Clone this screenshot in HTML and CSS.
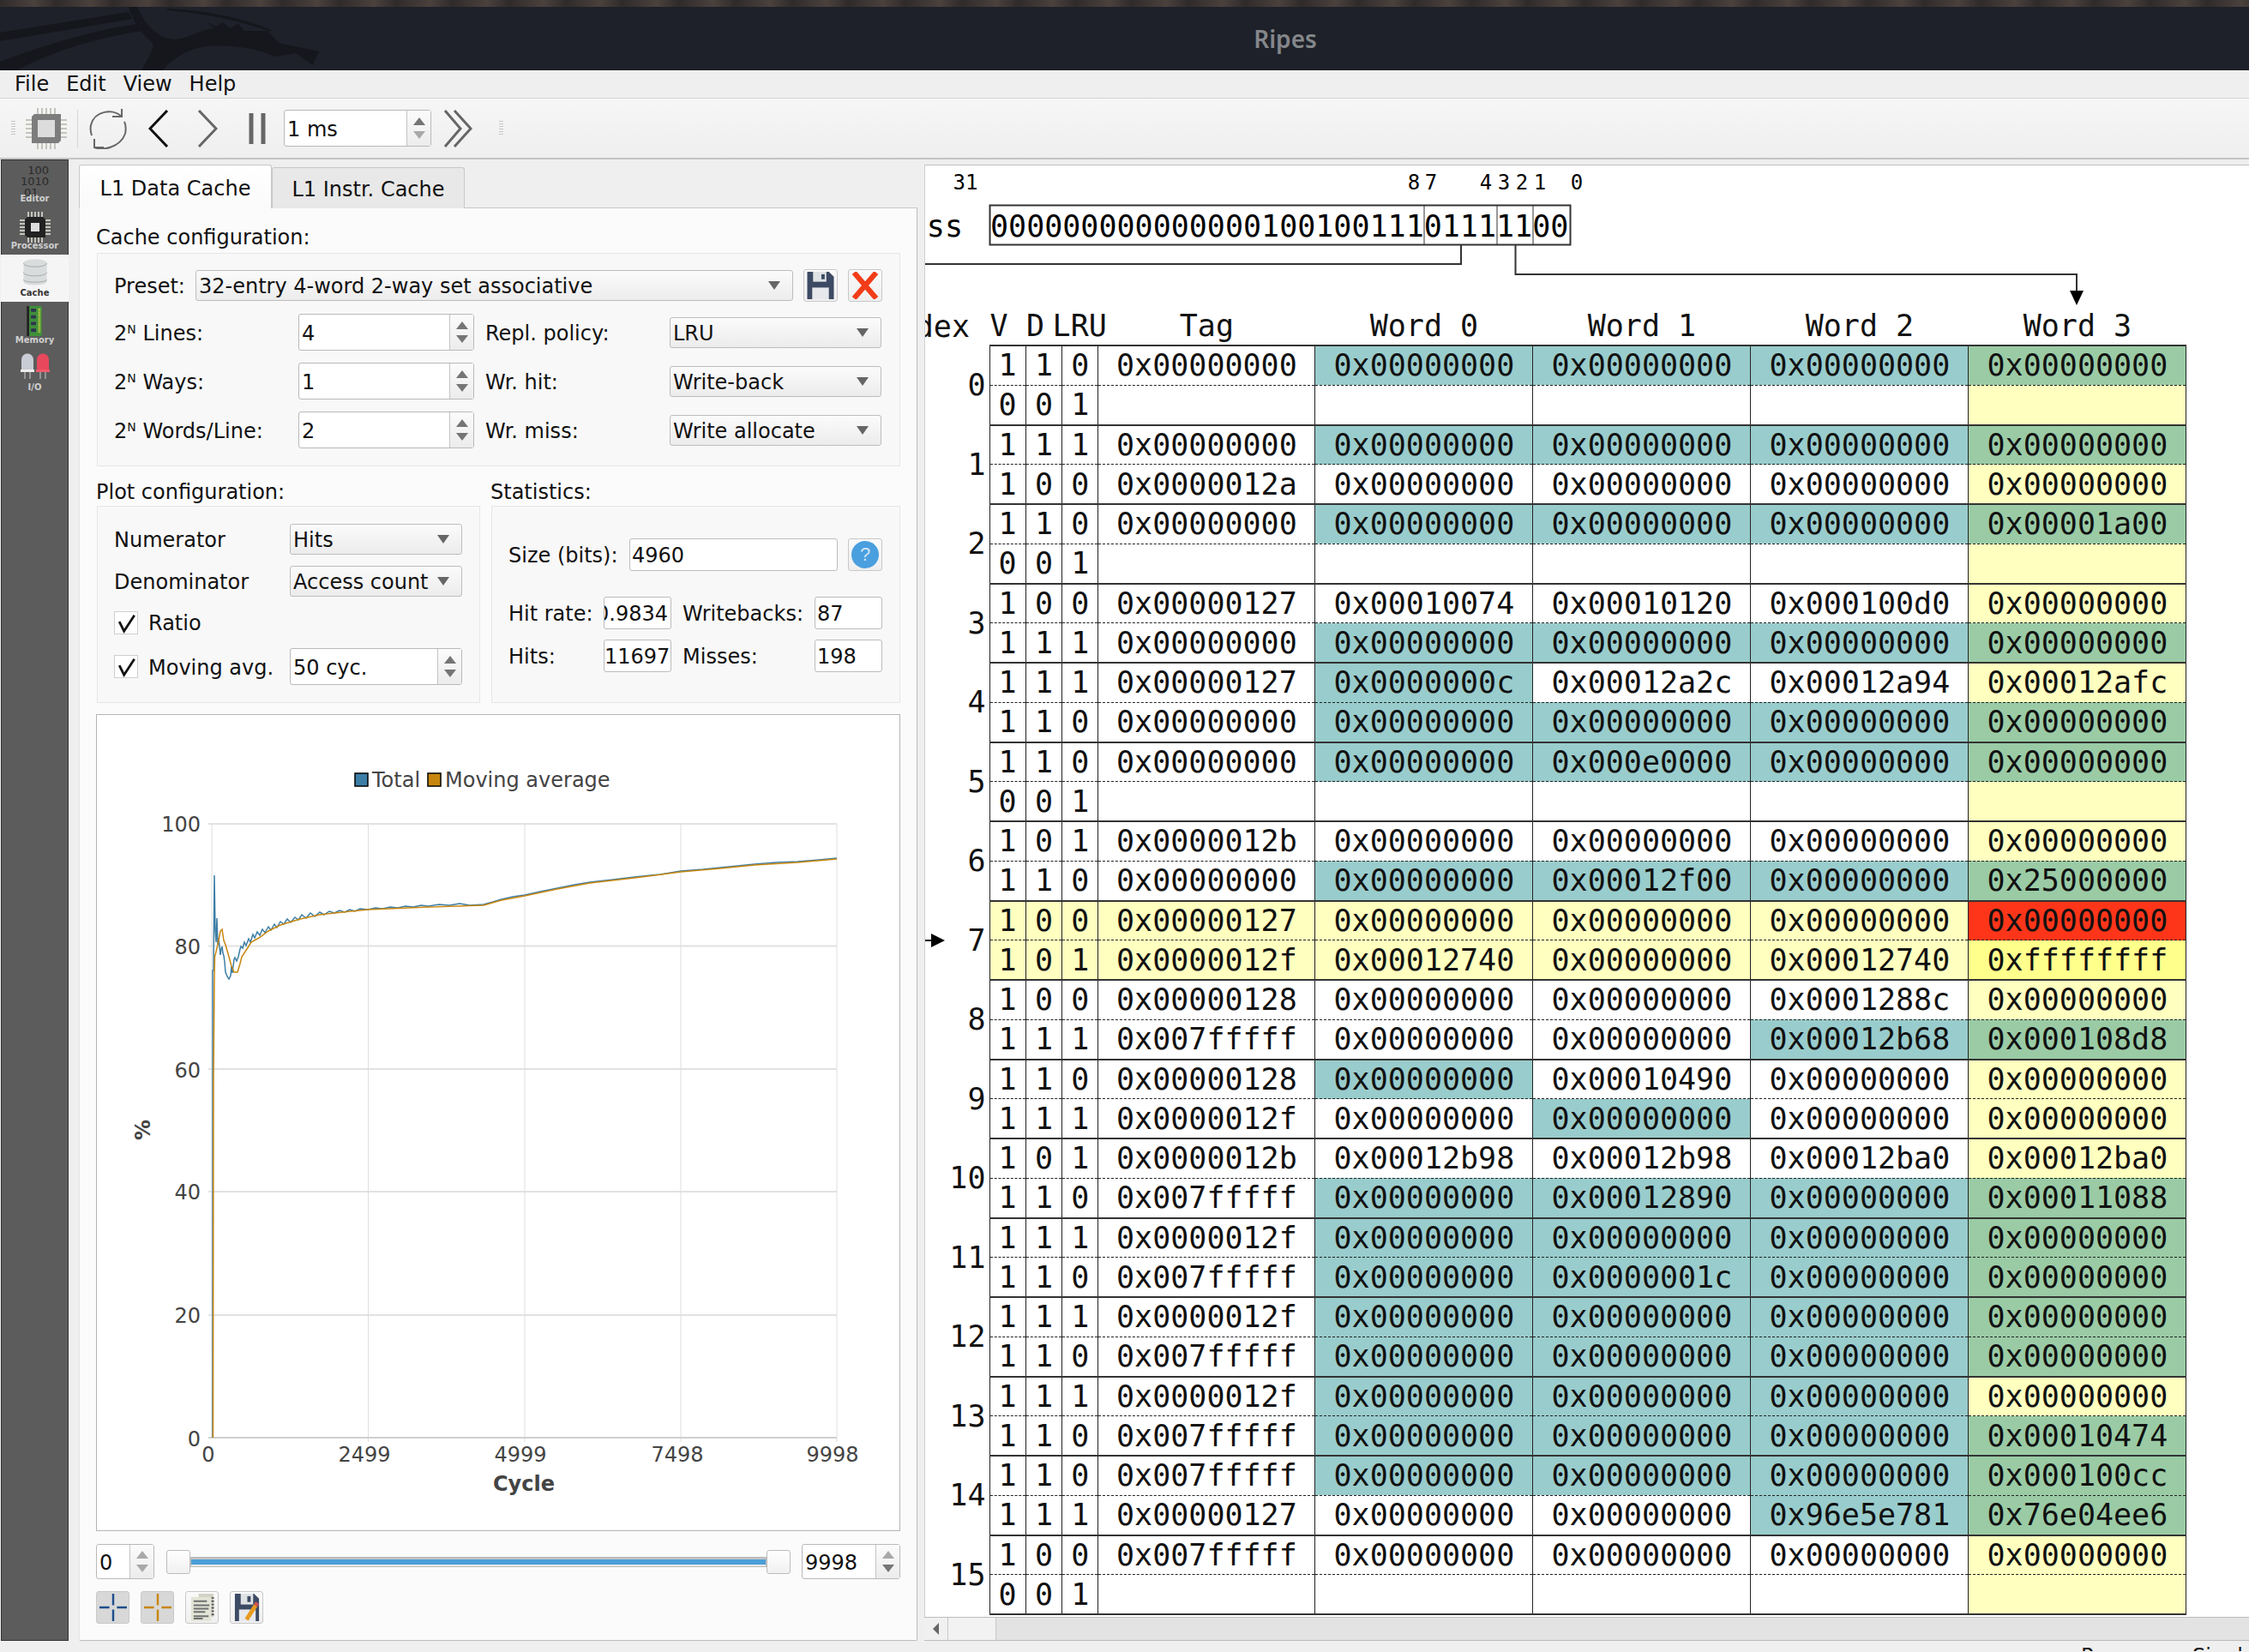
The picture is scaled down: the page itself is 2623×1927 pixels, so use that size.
FILE: index.html
```html
<!DOCTYPE html>
<html lang="en">

<head>
    <meta charset="UTF-8">
    <title>Ripes</title>
    <link rel="stylesheet" href="styles.css">
</head>

<body>
    <div class="wall"></div>
    <header class="titlebar">
        <svg class="dragon" viewBox="0 8 380 74">
            <path d="M0 38L150 14L154 22L0 48Z" />
            <path d="M0 72C60 50 110 35 160 28L165 36C110 45 60 60 20 82H0Z" />
            <path d="M150 8H160C170 30 185 46 205 46C222 44 235 34 250 33L240 25L252 31L260 26L268 33L278 28L285 36H312L325 50L372 60L365 76L345 62L320 66C300 56 270 52 240 54C215 58 200 70 190 82H165C175 65 180 55 178 50C165 40 155 25 150 8Z" />
            <path d="M195 10C240 12 290 22 318 36H312C280 24 240 16 195 12Z" />
        </svg>
        <span class="title">Ripes</span>
    </header>
    <nav class="menubar">
        <span>File</span><span>Edit</span><span>View</span><span>Help</span>
    </nav>
    <div class="toolbar">
        <i class="grip"></i>
        <svg class="tool-chip" viewBox="0 0 48 48">
            <path class="pins" d="M14 0V48M19 0V48M24 0V48M29 0V48M34 0V48M0 14H48M0 19H48M0 24H48M0 29H48M0 34H48" />
            <path class="chip-body" d="M10 7H41V38L38 41H7V10Z" />
            <rect class="chip-core" x="14" y="14" width="20" height="20" />
        </svg>
        <i class="tool-sep"></i>
        <svg class="tool-refresh" viewBox="0 0 44 48">
            <path d="M38 1V10H27M38 10C28 0 6 3 2 20C1 25 2 29 3 32M6 36V46H17M6 46C16 50 36 46 42 30C43 25 43 20 41 16" />
        </svg>
        <svg class="tool-back" viewBox="0 0 24 44"><path d="M22 1L2 22L22 43" /></svg>
        <svg class="tool-next" viewBox="0 0 24 44"><path d="M2 1L22 22L2 43" /></svg>
        <svg class="tool-pause" viewBox="0 0 20 36"><path d="M3 0V36M17 0V36" /></svg>
        <div class="spin tool-spin">
            <span class="spin-val">1 ms</span>
            <span class="spin-btns"><i class="up"></i><i class="down off"></i></span>
        </div>
        <svg class="tool-ff" viewBox="0 0 34 44"><path d="M2 1L20 22L2 43M13 1L32 22L13 43" /></svg>
        <i class="grip grip-end"></i>
    </div>

    <main class="main">
        <aside class="side">
            <div class="side-tab">
                <div class="bits">&nbsp;&nbsp;100<br>1010<br>&nbsp;01</div>
                <span>Editor</span>
            </div>
            <div class="side-tab">
                <svg class="ico-chip" viewBox="0 0 36 36">
                    <path class="pins" d="M10 0V36M14 0V36M18 0V36M22 0V36M26 0V36M0 10H36M0 14H36M0 18H36M0 22H36M0 26H36" />
                    <path fill="#222" d="M9 6H27L30 9V30H9L6 27V9Z" />
                    <rect fill="#ddd" x="13" y="13" width="10" height="10" />
                </svg>
                <span>Processor</span>
            </div>
            <div class="side-tab active">
                <svg class="ico-cache" viewBox="0 0 28 32">
                    <path fill="#d9dcdc" d="M0 5C0 -1 28 -1 28 5V27C28 33 0 33 0 27Z" />
                    <path fill="none" stroke="#a5a8a8" stroke-width="1" d="M0 5C0 11 28 11 28 5M0 16C0 22 28 22 28 16M0 25C0 29 28 29 28 25" />
                </svg>
                <span>Cache</span>
            </div>
            <div class="side-tab">
                <svg class="ico-mem" viewBox="0 0 20 36">
                    <rect fill="#222" x="0" y="0" width="3" height="36" />
                    <rect fill="#3f8f3a" x="3" y="0" width="15" height="36" />
                    <path fill="#2d3550" d="M5 3H11V7H5ZM5 11H11V15H5ZM5 19H11V23H5ZM5 27H11V31H5Z" />
                    <path stroke="#e4d84a" stroke-width="3" stroke-dasharray="1 1" d="M15 3V33" />
                </svg>
                <span>Memory</span>
            </div>
            <div class="side-tab">
                <svg class="ico-led" viewBox="0 0 36 30">
                    <path fill="#c8ccd4" d="M2 20V8C2 -2 16 -2 16 8V20Z" />
                    <path fill="#e8485c" d="M20 20V8C20 -2 34 -2 34 8V20Z" />
                    <path fill="#eee" d="M1 19H17V22H1Z" />
                    <path fill="#f05a6a" d="M19 19H35V22H19Z" />
                    <path stroke="#ccc" stroke-width="1" d="M6 22V30M12 22V30M24 22V30M30 22V30" />
                </svg>
                <span>I/O</span>
            </div>
        </aside>

        <section class="left">
            <div class="tabbar">
                <span class="tab active">L1 Data Cache</span>
                <span class="tab">L1 Instr. Cache</span>
            </div>
            <div class="pane">
                <div class="group-title first">Cache configuration:</div>
                <div class="group cache-group">
                    <div class="preset-row">
                        <span class="preset-label">Preset:</span>
                        <div class="combo preset-combo"><span>32-entry 4-word 2-way set associative</span><i></i></div>
                        <button class="icon-btn">
                            <svg viewBox="0 0 32 33" class="btn-svg">
                                <path fill="#3d4a63" d="M0 0H26L32 6V33H0Z" />
                                <path fill="#dfe2e4" d="M7 0H23V12H7Z" />
                                <rect fill="#3d4a63" x="17" y="3" width="4" height="6" />
                                <rect fill="#e6e8ec" x="6" y="19" width="20" height="14" />
                            </svg>
                        </button>
                        <button class="icon-btn">
                            <svg viewBox="0 0 31 31" class="btn-svg"><path class="red-x" d="M3 1L28 30M28 1L3 30" /></svg>
                        </button>
                    </div>
                    <div class="cfg-grid">
                        <span>2<sup>N</sup> Lines:</span>
                        <div class="spin"><span class="spin-val">4</span><span class="spin-btns"><i class="up"></i><i class="down"></i></span></div>
                        <span>Repl. policy:</span>
                        <div class="combo"><span>LRU</span><i></i></div>
                        <span>2<sup>N</sup> Ways:</span>
                        <div class="spin"><span class="spin-val">1</span><span class="spin-btns"><i class="up"></i><i class="down"></i></span></div>
                        <span>Wr. hit:</span>
                        <div class="combo"><span>Write-back</span><i></i></div>
                        <span>2<sup>N</sup> Words/Line:</span>
                        <div class="spin"><span class="spin-val">2</span><span class="spin-btns"><i class="up"></i><i class="down"></i></span></div>
                        <span>Wr. miss:</span>
                        <div class="combo"><span>Write allocate</span><i></i></div>
                    </div>
                </div>

                <div class="two-groups">
                    <div class="col-plot">
                        <div class="group-title">Plot configuration:</div>
                        <div class="group plot-group">
                            <span>Numerator</span>
                            <div class="combo"><span>Hits</span><i></i></div>
                            <span>Denominator</span>
                            <div class="combo"><span>Access count</span><i></i></div>
                            <label class="check-row wide"><span class="check"><svg viewBox="0 0 27 27"><path d="M5 12L11 24L24 4" /></svg></span><b>Ratio</b></label>
                            <label class="check-row"><span class="check"><svg viewBox="0 0 27 27"><path d="M5 12L11 24L24 4" /></svg></span><b>Moving avg.</b></label>
                            <div class="spin"><span class="spin-val">50 cyc.</span><span class="spin-btns"><i class="up"></i><i class="down"></i></span></div>
                        </div>
                    </div>
                    <div class="col-stats">
                        <div class="group-title">Statistics:</div>
                        <div class="group stats-group">
                            <div class="size-row">
                                <span class="size-label">Size (bits):</span>
                                <div class="field size-field">4960</div>
                                <button class="icon-btn help"><span class="help-dot">?</span></button>
                            </div>
                            <div class="stats-grid">
                                <span>Hit rate:</span>
                                <div class="field clipped"><span>0.9834</span></div>
                                <span>Writebacks:</span>
                                <div class="field">87</div>
                                <span>Hits:</span>
                                <div class="field tight">11697</div>
                                <span>Misses:</span>
                                <div class="field">198</div>
                            </div>
                        </div>
                    </div>
                </div>

                <div class="chart">
                    <svg viewBox="113 835 936 951">
                        <rect class="swatch-a" x="414" y="903" width="15" height="15" />
                        <text class="lbl" x="434" y="919">Total</text>
                        <rect class="swatch-b" x="499" y="903" width="15" height="15" />
                        <text class="lbl" x="519" y="919">Moving average</text>

                        <path class="grid" d="M243 962H976M243 1104.500H976M243 1248H976M243 1391H976M243 1535H976" />
                        <path class="grid thin" d="M247 962V1678M429.500 962V1683M612 962V1683M794 962V1683M976 962V1683" />
                        <path class="axis" d="M243 1678H976" />

                        <text class="lbl end" x="234" y="971">100</text>
                        <text class="lbl end" x="234" y="1114">80</text>
                        <text class="lbl end" x="234" y="1258">60</text>
                        <text class="lbl end" x="234" y="1400">40</text>
                        <text class="lbl end" x="234" y="1544">20</text>
                        <text class="lbl end" x="234" y="1688">0</text>
                        <text class="lbl mid" x="243" y="1706">0</text>
                        <text class="lbl mid" x="425" y="1706">2499</text>
                        <text class="lbl mid" x="607" y="1706">4999</text>
                        <text class="lbl mid" x="790" y="1706">7498</text>
                        <text class="lbl mid" x="971" y="1706">9998</text>
                        <text class="lbl mid bold" x="611" y="1740">Cycle</text>
                        <text class="lbl mid bold" transform="translate(175 1319) rotate(-90)">%</text>

                        <polyline class="line-a" points="248,1678 248,1133 249,1133 250,1022 251,1085 252,1100 253,1072 254,1103 255,1095 257,1115 258,1108 259,1105 260,1113 261,1116 262,1123 263,1135 265,1140 267,1143 269,1139 270,1128 271,1136 273,1120 274,1118 276,1122 278,1117 280,1108 281,1105 283,1107 285,1100 287,1104 290,1096 292,1100 295,1091 297,1095 300,1088 303,1092 306,1085 309,1089 313,1082 316,1086 320,1079 323,1083 327,1076 331,1079 335,1073 339,1077 344,1071 348,1074 352,1068 357,1072 362,1066 367,1070 373,1065 378,1068 384,1064 390,1066 396,1063 402,1065 408,1062 414,1064 420,1061 429,1062 438,1060 446,1061 455,1059 464,1060 473,1058 482,1059 491,1057 500,1058 512,1056 524,1057 536,1055 548,1057 564,1056 575,1053 585,1050 598,1047 612,1045 630,1041 650,1037 670,1033 688,1030 715,1027 740,1024 770,1021 794,1017 820,1015 840,1013 860,1011 880,1009 905,1007 930,1006 955,1004 976,1002" />
                        <polyline class="line-b" points="248.500,1678 249,1262 250,1143 250.500,1117 254,1103 257,1087 259,1085 261,1098 263,1103 267,1117 270,1128 273,1135 277,1135 280,1125 282,1117 288,1108 293,1100 302,1095 313,1087 327,1080 350,1073 373,1068 390,1066 429,1062 500,1059 564,1057 585,1051 612,1046 650,1038 688,1031 740,1025 794,1018 840,1014 880,1010 930,1007 976,1003" />
                    </svg>
                </div>

                <div class="range-row">
                    <div class="spin range-min"><span class="spin-val">0</span><span class="spin-btns"><i class="up off"></i><i class="down off"></i></span></div>
                    <div class="slider">
                        <i class="handle"></i>
                        <div class="track"></div>
                        <i class="handle"></i>
                    </div>
                    <div class="spin range-max"><span class="spin-val">9998</span><span class="spin-btns"><i class="up off"></i><i class="down"></i></span></div>
                </div>

                <div class="chart-btns">
                    <button class="icon-btn on">
                        <svg viewBox="0 0 33 33" class="btn-svg"><path class="cross-a" d="M16.500 0V14M16.500 19V33M0 16.500H12M21 16.500H33" /></svg>
                    </button>
                    <button class="icon-btn on">
                        <svg viewBox="0 0 33 33" class="btn-svg"><path class="cross-b" d="M16.500 0V14M16.500 19V33M0 16.500H12M21 16.500H33" /></svg>
                    </button>
                    <button class="icon-btn">
                        <svg viewBox="0 0 33 33" class="btn-svg">
                            <path fill="#d2d3c4" d="M12 0H30V28H27V4H12Z" />
                            <path fill="#e3e4d6" d="M3 4H27V33H3Z" />
                            <path stroke="#6d7170" stroke-width="2" d="M6 9H22M6 14H25M6 18H24M6 22H20M6 27H24M6 30H17" />
                            <path stroke="#555" stroke-width="3" stroke-dasharray="2 2" d="M29 4V26" />
                        </svg>
                    </button>
                    <button class="icon-btn">
                        <svg viewBox="0 0 33 33" class="btn-svg">
                            <path fill="#3d4a63" d="M2 0H25L31 6V33H2Z" />
                            <path fill="#dfe2e4" d="M9 0H24V13H9Z" />
                            <rect fill="#3d4a63" x="17" y="3" width="4" height="7" />
                            <rect fill="#e6e8ec" x="7" y="19" width="20" height="14" />
                            <path stroke="#e89a20" stroke-width="5" d="M16 31L27 14" />
                            <path stroke="#d9534f" stroke-width="5" d="M27 14L29 11" />
                        </svg>
                    </button>
                </div>
            </div>
        </section>

        <i class="splitter"></i>

        <section class="view">
            <div class="canvas">
                <svg class="addr" viewBox="1078 194 1545 165">
                    <text class="bit" x="1126" y="222">31</text>
                    <text class="bit" x="1649" y="222">8</text>
                    <text class="bit" x="1669" y="222">7</text>
                    <text class="bit" x="1733" y="222">4</text>
                    <text class="bit" x="1754" y="222">3</text>
                    <text class="bit" x="1775" y="222">2</text>
                    <text class="bit" x="1796" y="222">1</text>
                    <text class="bit" x="1839" y="222">0</text>
                    <text class="mono end" x="1123" y="277">ss</text>
                    <rect class="wire" x="1154.500" y="240.500" width="677" height="46" />
                    <path class="wire thin" d="M1661 240V286M1746 240V286M1788 240V286" />
                    <text class="mono" x="1155" y="277">00000000000000010010011101111100</text>
                    <path class="wire" d="M1704 286V309H1078M1767.500 286V321H2422V342" />
                    <path d="M2414 340H2430L2422 357Z" />
                </svg>
                <table class="cache">
                    <colgroup>
                        <col class="c-idx"><col class="c-bit"><col class="c-bit"><col class="c-bit"><col class="c-tag"><col class="c-word"><col class="c-word"><col class="c-word"><col class="c-word">
                    </colgroup>
                    <thead>
                        <tr>
                            <th class="h-idx">dex</th><th class="h-bit">V</th><th class="h-bit">D</th><th class="h-lru">LRU</th><th>Tag</th><th>Word 0</th><th>Word 1</th><th>Word 2</th><th>Word 3</th>
                        </tr>
                    </thead>
                    <tbody>
                        <tr class="top"><td class="idx" rowspan="2">0</td><td>1</td><td>1</td><td>0</td><td>0x00000000</td><td class="t">0x00000000</td><td class="t">0x00000000</td><td class="t">0x00000000</td><td class="g">0x00000000</td></tr>
                        <tr class="low"><td>0</td><td>0</td><td>1</td><td></td><td></td><td></td><td></td><td class="y"></td></tr>
                        <tr class="top"><td class="idx" rowspan="2">1</td><td>1</td><td>1</td><td>1</td><td>0x00000000</td><td class="t">0x00000000</td><td class="t">0x00000000</td><td class="t">0x00000000</td><td class="g">0x00000000</td></tr>
                        <tr class="low"><td>1</td><td>0</td><td>0</td><td>0x0000012a</td><td>0x00000000</td><td>0x00000000</td><td>0x00000000</td><td class="y">0x00000000</td></tr>
                        <tr class="top"><td class="idx" rowspan="2">2</td><td>1</td><td>1</td><td>0</td><td>0x00000000</td><td class="t">0x00000000</td><td class="t">0x00000000</td><td class="t">0x00000000</td><td class="g">0x00001a00</td></tr>
                        <tr class="low"><td>0</td><td>0</td><td>1</td><td></td><td></td><td></td><td></td><td class="y"></td></tr>
                        <tr class="top"><td class="idx" rowspan="2">3</td><td>1</td><td>0</td><td>0</td><td>0x00000127</td><td>0x00010074</td><td>0x00010120</td><td>0x000100d0</td><td class="y">0x00000000</td></tr>
                        <tr class="low"><td>1</td><td>1</td><td>1</td><td>0x00000000</td><td class="t">0x00000000</td><td class="t">0x00000000</td><td class="t">0x00000000</td><td class="g">0x00000000</td></tr>
                        <tr class="top"><td class="idx" rowspan="2">4</td><td>1</td><td>1</td><td>1</td><td>0x00000127</td><td class="t">0x0000000c</td><td>0x00012a2c</td><td>0x00012a94</td><td class="y">0x00012afc</td></tr>
                        <tr class="low"><td>1</td><td>1</td><td>0</td><td>0x00000000</td><td class="t">0x00000000</td><td class="t">0x00000000</td><td class="t">0x00000000</td><td class="g">0x00000000</td></tr>
                        <tr class="top"><td class="idx" rowspan="2">5</td><td>1</td><td>1</td><td>0</td><td>0x00000000</td><td class="t">0x00000000</td><td class="t">0x000e0000</td><td class="t">0x00000000</td><td class="g">0x00000000</td></tr>
                        <tr class="low"><td>0</td><td>0</td><td>1</td><td></td><td></td><td></td><td></td><td class="y"></td></tr>
                        <tr class="top"><td class="idx" rowspan="2">6</td><td>1</td><td>0</td><td>1</td><td>0x0000012b</td><td>0x00000000</td><td>0x00000000</td><td>0x00000000</td><td class="y">0x00000000</td></tr>
                        <tr class="low"><td>1</td><td>1</td><td>0</td><td>0x00000000</td><td class="t">0x00000000</td><td class="t">0x00012f00</td><td class="t">0x00000000</td><td class="g">0x25000000</td></tr>
                        <tr class="top hl"><td class="idx" rowspan="2"><i class="pointer"></i>7</td><td>1</td><td>0</td><td>0</td><td>0x00000127</td><td>0x00000000</td><td>0x00000000</td><td>0x00000000</td><td class="r">0x00000000</td></tr>
                        <tr class="low hl"><td>1</td><td>0</td><td>1</td><td>0x0000012f</td><td>0x00012740</td><td>0x00000000</td><td>0x00012740</td><td class="b">0xffffffff</td></tr>
                        <tr class="top"><td class="idx" rowspan="2">8</td><td>1</td><td>0</td><td>0</td><td>0x00000128</td><td>0x00000000</td><td>0x00000000</td><td>0x0001288c</td><td class="y">0x00000000</td></tr>
                        <tr class="low"><td>1</td><td>1</td><td>1</td><td>0x007fffff</td><td>0x00000000</td><td>0x00000000</td><td class="t">0x00012b68</td><td class="g">0x000108d8</td></tr>
                        <tr class="top"><td class="idx" rowspan="2">9</td><td>1</td><td>1</td><td>0</td><td>0x00000128</td><td class="t">0x00000000</td><td>0x00010490</td><td>0x00000000</td><td class="y">0x00000000</td></tr>
                        <tr class="low"><td>1</td><td>1</td><td>1</td><td>0x0000012f</td><td>0x00000000</td><td class="t">0x00000000</td><td>0x00000000</td><td class="y">0x00000000</td></tr>
                        <tr class="top"><td class="idx" rowspan="2">10</td><td>1</td><td>0</td><td>1</td><td>0x0000012b</td><td>0x00012b98</td><td>0x00012b98</td><td>0x00012ba0</td><td class="y">0x00012ba0</td></tr>
                        <tr class="low"><td>1</td><td>1</td><td>0</td><td>0x007fffff</td><td class="t">0x00000000</td><td class="t">0x00012890</td><td class="t">0x00000000</td><td class="g">0x00011088</td></tr>
                        <tr class="top"><td class="idx" rowspan="2">11</td><td>1</td><td>1</td><td>1</td><td>0x0000012f</td><td class="t">0x00000000</td><td class="t">0x00000000</td><td class="t">0x00000000</td><td class="g">0x00000000</td></tr>
                        <tr class="low"><td>1</td><td>1</td><td>0</td><td>0x007fffff</td><td class="t">0x00000000</td><td class="t">0x0000001c</td><td class="t">0x00000000</td><td class="g">0x00000000</td></tr>
                        <tr class="top"><td class="idx" rowspan="2">12</td><td>1</td><td>1</td><td>1</td><td>0x0000012f</td><td class="t">0x00000000</td><td class="t">0x00000000</td><td class="t">0x00000000</td><td class="g">0x00000000</td></tr>
                        <tr class="low"><td>1</td><td>1</td><td>0</td><td>0x007fffff</td><td class="t">0x00000000</td><td class="t">0x00000000</td><td class="t">0x00000000</td><td class="g">0x00000000</td></tr>
                        <tr class="top"><td class="idx" rowspan="2">13</td><td>1</td><td>1</td><td>1</td><td>0x0000012f</td><td class="t">0x00000000</td><td class="t">0x00000000</td><td class="t">0x00000000</td><td class="y">0x00000000</td></tr>
                        <tr class="low"><td>1</td><td>1</td><td>0</td><td>0x007fffff</td><td class="t">0x00000000</td><td class="t">0x00000000</td><td class="t">0x00000000</td><td class="g">0x00010474</td></tr>
                        <tr class="top"><td class="idx" rowspan="2">14</td><td>1</td><td>1</td><td>0</td><td>0x007fffff</td><td class="t">0x00000000</td><td class="t">0x00000000</td><td class="t">0x00000000</td><td class="g">0x000100cc</td></tr>
                        <tr class="low"><td>1</td><td>1</td><td>1</td><td>0x00000127</td><td>0x00000000</td><td>0x00000000</td><td class="t">0x96e5e781</td><td class="g">0x76e04ee6</td></tr>
                        <tr class="top"><td class="idx" rowspan="2">15</td><td>1</td><td>0</td><td>0</td><td>0x007fffff</td><td>0x00000000</td><td>0x00000000</td><td>0x00000000</td><td class="y">0x00000000</td></tr>
                        <tr class="low last"><td>0</td><td>0</td><td>1</td><td></td><td></td><td></td><td></td><td class="y"></td></tr>
                    </tbody>
                </table>
            </div>
            <div class="hscroll">
                <span class="scroll-btn"><i></i></span>
                <span class="scroll-handle"></span>
            </div>
        </section>
    </main>

    <footer class="status">
        <span class="status-a">Processor:</span>
        <span class="status-b">Single-cycle</span>
    </footer>
</body>

</html>
```

FILE: styles.css
```css
* {
    box-sizing: border-box;
    margin: 0;
    padding: 0;
}

html,
body {
    width: 2623px;
    height: 1927px;
    overflow: hidden;
}

body {
    display: flex;
    flex-direction: column;
    background-color: #efefef;
    color: #111;
    font-family: 'DejaVu Sans', sans-serif;
    font-size: 24px;
}

i {
    display: block;
    font-style: normal;
}

/* window chrome */
.wall {
    height: 8px;
    flex: none;
    background: repeating-linear-gradient(90deg, #2f2b2a 0, #4b413d 40px, #2f2b2a 66px);
}

.titlebar {
    display: flex;
    align-items: center;
    justify-content: center;
    height: 74px;
    flex: none;
    overflow: hidden;
    padding-left: 375px;
    background-color: #1e2129;
}

.dragon {
    position: absolute;
    left: 0;
    top: 8px;
    width: 380px;
    height: 74px;
    fill: #15171c;
}

.title {
    color: #84878b;
    font-family: 'Noto Sans', sans-serif;
    font-size: 28px;
    font-weight: 600;
}

.menubar {
    display: flex;
    gap: 20px;
    align-items: center;
    height: 33px;
    flex: none;
    padding-left: 17px;
    border-bottom: 1px solid #d4d4d4;
    background-color: #efefef;
}

.toolbar {
    display: flex;
    align-items: center;
    height: 71px;
    flex: none;
    border-bottom: 2px solid #c4c4c4;
    background: linear-gradient(#f6f6f6, #efefef);
}

.toolbar svg {
    flex: none;
    fill: none;
}

.grip {
    width: 5px;
    height: 18px;
    margin-left: 13px;
    background: repeating-linear-gradient(#c6c6c6 0 1px, transparent 1px 3px);
}

.grip-end {
    margin-left: 31px;
}

.tool-chip {
    width: 48px;
    height: 48px;
    margin-left: 12px;
}

.pins {
    stroke: #c4c4bc;
    stroke-width: 2;
    fill: none;
}

.chip-body {
    fill: #7d7d7d;
}

.chip-core {
    fill: #dcdcdc;
}

.tool-sep {
    width: 1px;
    height: 44px;
    margin-left: 12px;
    background-color: #d6d6d6;
}

.tool-refresh {
    width: 44px;
    height: 48px;
    margin-left: 13px;
    stroke: #666;
    stroke-width: 2;
}

.tool-back,
.tool-next {
    width: 24px;
    height: 44px;
    stroke-width: 3;
}

.tool-back {
    margin-left: 25px;
    stroke: #111;
}

.tool-next {
    margin-left: 33px;
    stroke: #666;
}

.tool-pause {
    width: 20px;
    height: 36px;
    margin-left: 36px;
    stroke: #666;
    stroke-width: 5;
}

.tool-spin {
    width: 172px;
    height: 42px;
    margin-left: 21px;
}

.tool-ff {
    width: 34px;
    height: 44px;
    margin-left: 14px;
    stroke: #666;
    stroke-width: 3;
}

/* sidebar */
.main {
    display: flex;
    height: 1728px;
    flex: none;
}

.side {
    display: flex;
    flex-direction: column;
    width: 79px;
    margin-left: 1px;
    flex: none;
    border: 1px solid #333;
    background-color: #5c5c5c;
}

.side-tab {
    display: grid;
    grid-template-rows: 38px 14px;
    justify-items: center;
    height: 55px;
    flex: none;
    color: #cfcfcf;
    font-size: 10px;
    font-weight: bold;
}

.side-tab span {
    grid-row: 2;
    line-height: 14px;
    z-index: 1;
}

.side-tab.active {
    margin: 0 -1px;
    background-color: #f5f5f5;
    color: #333;
}

.side-tab svg {
    grid-row: 1;
    margin-top: 5px;
}

.ico-chip {
    width: 36px;
    height: 36px;
}

.ico-cache {
    width: 28px;
    height: 31px;
}

.ico-mem {
    width: 20px;
    height: 35px;
}

.ico-led {
    width: 36px;
    height: 30px;
}

.bits {
    grid-row: 1;
    padding-top: 5px;
    color: #2a2a2a;
    font-size: 13px;
    font-weight: normal;
    line-height: 13px;
}

/* left pane */
.left {
    display: flex;
    flex-direction: column;
    width: 978px;
    margin: 6px 0 0 12px;
    flex: none;
}

.tabbar {
    display: flex;
    align-items: flex-end;
    height: 50px;
    flex: none;
}

.tab {
    display: flex;
    align-items: center;
    justify-content: center;
    width: 225px;
    height: 48px;
    margin-bottom: -1px;
    padding-top: 2px;
    border: 1px solid #c8c8c8;
    border-bottom: 0;
    border-radius: 3px 3px 0 0;
    background-color: #e8e8e8;
    position: relative;
}

.tab.active {
    height: 51px;
    padding-top: 3px;
    background: linear-gradient(#fff, #fafafa);
    z-index: 1;
}

.pane {
    display: flex;
    flex-direction: column;
    flex: 1;
    padding: 0 19px;
    border: 1px solid #bcbcbc;
    border-top-color: #c8c8c8;
    border-left-color: #e4e4e4;
    border-radius: 0 0 2px 2px;
    background-color: #fbfbfb;
}

.group-title {
    height: 46px;
    margin-left: -1px;
    padding-top: 12px;
    line-height: 36px;
}

.group-title.first {
    height: 52px;
    margin-left: 0;
    padding-top: 16px;
}

.group {
    border: 1px solid #e6e6e6;
    background-color: #f8f8f8;
}

/* Qt's text sits a little lower in its row than the browser centres it */
.combo span,
.spin-val,
.field,
.cfg-grid>span,
.plot-group>span,
.stats-grid>span,
.size-label,
.preset-label,
.check-row b {
    padding-top: 2px;
}

.check-row b {
    font-weight: normal;
}

.cache-group {
    height: 249px;
    margin-left: 1px;
    padding: 18px 20px 0 19px;
}

.preset-row {
    display: flex;
    align-items: center;
    height: 38px;
}

.preset-label {
    width: 95px;
    flex: none;
}

.preset-combo {
    flex: 1;
    height: 36px;
    margin-right: 12px;
    padding-left: 4px;
}

.icon-btn {
    display: flex;
    align-items: center;
    justify-content: center;
    width: 40px;
    height: 38px;
    flex: none;
    border: 1px solid #c8c8c8;
    border-radius: 3px;
    background: linear-gradient(#fafafa, #efefef);
}

.icon-btn+.icon-btn {
    margin-left: 12px;
}

.btn-svg {
    width: 32px;
    height: 32px;
}

.red-x {
    fill: none;
    stroke: #f23c18;
    stroke-width: 6;
}

.combo {
    display: flex;
    align-items: center;
    justify-content: space-between;
    height: 36px;
    padding: 0 14px 0 3px;
    border: 1px solid #bdbdbd;
    border-radius: 3px;
    background: linear-gradient(#fbfbfb, #ececec);
    white-space: nowrap;
}

.combo i {
    width: 0;
    height: 0;
    flex: none;
    border-left: 7px solid transparent;
    border-right: 7px solid transparent;
    border-top: 10px solid #666;
}

.spin {
    display: flex;
    height: 43px;
    border: 1px solid #b9b9b9;
    border-radius: 3px;
    background-color: #fff;
}

.spin-val {
    display: flex;
    align-items: center;
    flex: 1;
    min-width: 0;
    padding-left: 3px;
    white-space: nowrap;
}

.spin-btns {
    display: flex;
    flex-direction: column;
    align-items: center;
    justify-content: center;
    gap: 7px;
    width: 28px;
    flex: none;
    border-left: 1px solid #c4c4c4;
    background: linear-gradient(#fbfbfb, #ececec);
}

.up,
.down {
    width: 0;
    height: 0;
    border-left: 7px solid transparent;
    border-right: 7px solid transparent;
}

.up {
    border-bottom: 9px solid #757575;
}

.down {
    border-top: 9px solid #757575;
}

.up.off {
    border-bottom-color: #a8a8a8;
}

.down.off {
    border-top-color: #a8a8a8;
}

.cfg-grid {
    display: grid;
    grid-template-columns: 215px 205px 228px 247px;
    grid-auto-rows: 43px;
    row-gap: 14px;
    align-items: center;
    margin-top: 14px;
}

.cfg-grid>span:nth-child(4n+3) {
    padding-left: 13px;
}

sup {
    font-size: 14px;
    line-height: 0;
    vertical-align: 8px;
}

.two-groups {
    display: flex;
    gap: 13px;
    margin-left: 1px;
}

.col-plot {
    width: 447px;
    flex: none;
}

.col-stats {
    width: 477px;
    flex: none;
}

.plot-group {
    display: grid;
    grid-template-columns: 205px 201px;
    grid-template-rows: 37px 36px 34px 43px;
    row-gap: 13px;
    align-items: center;
    height: 230px;
    padding: 19px 0 0 19px;
}

.check-row {
    display: flex;
    align-items: center;
    gap: 12px;
}

.check-row.wide {
    grid-column: 1 / 3;
}

.check {
    width: 28px;
    height: 27px;
    flex: none;
    border: 1px solid #cfcfcf;
    background-color: #fff;
}

.check svg {
    display: block;
    width: 26px;
    height: 25px;
    fill: none;
    stroke: #111;
    stroke-width: 3;
}

.stats-group {
    height: 230px;
    padding: 37px 20px 0 19px;
}

.size-row {
    display: flex;
    align-items: center;
    height: 38px;
}

.size-label {
    width: 141px;
    flex: none;
}

.field {
    display: flex;
    align-items: center;
    height: 38px;
    padding-left: 2px;
    overflow: hidden;
    border: 1px solid #bcbcbc;
    border-radius: 3px;
    background-color: #fff;
    white-space: nowrap;
}

.size-field {
    flex: 1;
    margin-right: 12px;
}

.clipped {
    justify-content: flex-end;
    padding-left: 0;
    padding-right: 3px;
}

.tight {
    padding-left: 0;
}

.help-dot {
    display: flex;
    align-items: center;
    justify-content: center;
    width: 32px;
    height: 32px;
    border-radius: 50%;
    background-color: #4a9fdf;
    color: #cfe6f7;
    font-size: 22px;
}

.stats-grid {
    display: grid;
    grid-template-columns: 111px 79px 167px 79px;
    grid-auto-rows: 38px;
    row-gap: 12px;
    align-items: center;
    margin-top: 30px;
}

.stats-grid>span:nth-child(4n+3) {
    padding-left: 13px;
}

/* chart */
.chart {
    height: 953px;
    margin-top: 13px;
    border: 1px solid #b5b5b5;
    background-color: #fff;
}

.chart svg {
    display: block;
    width: 936px;
    height: 951px;
}

.lbl {
    fill: #444;
    font-size: 24px;
}

.end {
    text-anchor: end;
}

.mid {
    text-anchor: middle;
}

.bold {
    font-weight: bold;
}

.swatch-a,
.swatch-b {
    stroke: #000;
    stroke-width: 1.500;
}

.swatch-a {
    fill: #3d7ea6;
}

.swatch-b {
    fill: #c8860f;
}

.grid {
    fill: none;
    stroke: #e2e2e2;
    stroke-width: 2;
}

.grid.thin {
    stroke-width: 1;
    stroke: #dedede;
}

.axis {
    fill: none;
    stroke: #d0d0d0;
    stroke-width: 2;
}

.line-a,
.line-b {
    fill: none;
}

.line-a {
    stroke: #3d7ea6;
    stroke-width: 1.500;
}

.line-b {
    stroke: #c8860f;
    stroke-width: 1.500;
}

.range-row {
    display: flex;
    align-items: center;
    height: 41px;
    margin-top: 15px;
}

.range-row .spin {
    height: 41px;
}

.range-min {
    width: 68px;
    flex: none;
}

.range-max {
    width: 115px;
    flex: none;
}

.slider {
    display: flex;
    align-items: center;
    flex: 1;
    margin: 0 13px 0 14px;
}

.handle {
    width: 28px;
    height: 28px;
    flex: none;
    border: 1px solid #bdbdbd;
    border-radius: 3px;
    background: linear-gradient(#fff, #f0f0f0);
}

.track {
    flex: 1;
    height: 12px;
    border: 1px solid #bbb;
    border-top-width: 2px;
    background: linear-gradient(#c8c8c8 0 1px, #4a9fd8 1px 7px, #e8e8e8 7px);
}

.chart-btns {
    display: flex;
    margin-top: 14px;
}

.chart-btns .icon-btn {
    width: 39px;
}

.chart-btns .icon-btn+.icon-btn {
    margin-left: 13px;
}

.icon-btn.on {
    background: #d8d8d8;
}

.cross-a,
.cross-b {
    fill: none;
    stroke-width: 2.500;
}

.cross-a {
    stroke: #1d4f8c;
}

.cross-b {
    stroke: #c8860f;
}

/* cache view */
.splitter {
    width: 8px;
    flex: none;
}

.view {
    display: flex;
    flex-direction: column;
    width: 1545px;
    margin-top: 6px;
    flex: none;
}

.canvas {
    flex: 1;
    overflow: hidden;
    border-top: 1px solid #c0c0c0;
    border-left: 1px solid #d0d0d0;
    background-color: #fff;
    font-family: 'DejaVu Sans Mono', monospace;
    font-size: 35px;
}

.addr {
    display: block;
    width: 1545px;
    height: 165px;
    margin-left: -1px;
}

.bit {
    font-size: 24px;
    text-anchor: middle;
}

.mono {
    font-size: 35px;
    text-anchor: start;
}

.mono.end {
    text-anchor: end;
}

.wire {
    fill: none;
    stroke: #333;
    stroke-width: 2;
}

.wire.thin {
    stroke-width: 1;
}

.cache {
    width: 1532px;
    margin-left: -61px;
    border-collapse: collapse;
    table-layout: fixed;
}

.c-idx {
    width: 136px;
}

.c-bit {
    width: 42.300px;
}

.c-tag {
    width: 253px;
}

.c-word {
    width: 254px;
}

th {
    height: 45px;
    font-weight: normal;
    line-height: 40px;
    white-space: nowrap;
}

.h-idx {
    padding-right: 23px;
    text-align: right;
}

.h-bit {
    padding-right: 20px;
}

.h-lru {
    text-align: left;
    text-indent: -11px;
}

td {
    height: 46.250px;
    padding: 0;
    border-left: 1px solid #222;
    border-right: 1px solid #222;
    line-height: 40px;
    text-align: center;
    white-space: nowrap;
}

td.idx {
    padding-right: 4px;
    border: 0;
    text-align: right;
    position: relative;
}

.top td {
    border-top: 2px solid #333;
}

.low td {
    border-top: 1px dashed #222;
}

.last td {
    border-bottom: 2px solid #333;
}

.top td.idx {
    border-top: 0;
    border-left: 0;
}

.hl td {
    background-color: #ffffbf;
}

.hl td.idx {
    background-color: transparent;
}

td.t {
    background-color: #99cccc;
}

td.g {
    background-color: #9acba5;
}

td.y {
    background-color: #ffffbf;
}

td.r {
    background-color: #ff351a;
}

td.b {
    background-color: #ffff8c;
}

.pointer {
    position: absolute;
    left: 61px;
    top: 38px;
    width: 24px;
    height: 16px;
    background: linear-gradient(#000, #000) left center / 7px 2px no-repeat;
}

.pointer::after {
    content: "";
    position: absolute;
    left: 7px;
    top: 0;
    border-left: 16px solid #000;
    border-top: 8px solid transparent;
    border-bottom: 8px solid transparent;
}

.hscroll {
    display: flex;
    height: 28px;
    flex: none;
    border-top: 1px solid #bcbcbc;
    border-bottom: 1px solid #bcbcbc;
    background-color: #e3e3e3;
}

.scroll-btn {
    display: flex;
    align-items: center;
    justify-content: center;
    width: 28px;
    border-right: 1px solid #c8c8c8;
    background-color: #f0f0f0;
}

.scroll-btn i {
    border-right: 7px solid #666;
    border-top: 7px solid transparent;
    border-bottom: 7px solid transparent;
}

.scroll-handle {
    width: 56px;
    border-right: 1px solid #c8c8c8;
    background-color: #f2f2f2;
}

.status {
    display: flex;
    height: 12px;
    flex: none;
    overflow: hidden;
    padding: 4px 0 0 2427px;
    line-height: 28px;
}

.status-a {
    width: 130px;
    flex: none;
}

.status-b {
    flex: none;
}
```
